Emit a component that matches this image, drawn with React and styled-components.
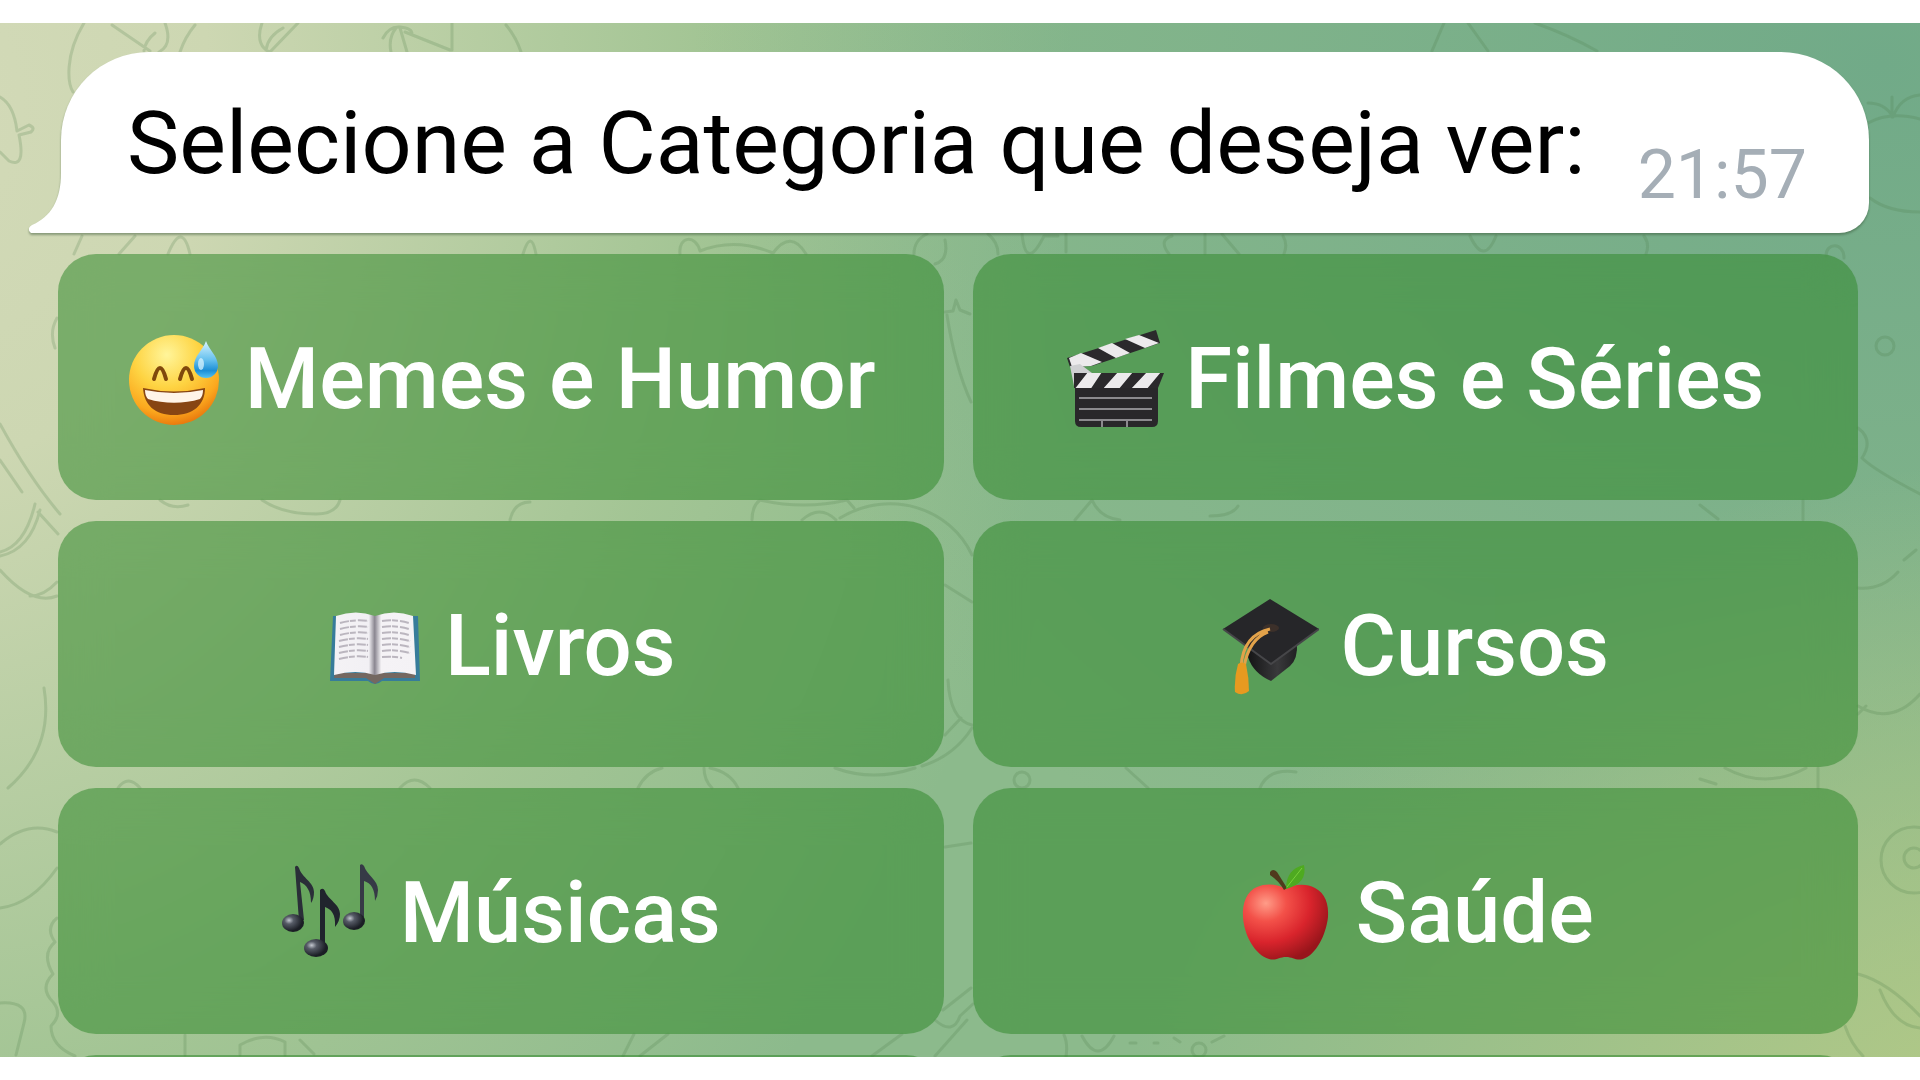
import React from 'react';
import styled, { createGlobalStyle } from 'styled-components';

const GlobalStyle = createGlobalStyle`
  * {
    box-sizing: border-box;
  }

  body {
    margin: 0;
    background: #fff;
    font-family: Roboto, "Liberation Sans", sans-serif;
  }
`;

const Page = styled.main`
  display: flex;
  height: 100vh;
  padding: 23px 0;
`;

const Chat = styled.section`
  position: relative;
  flex: 1;
  overflow: hidden;
  padding-top: 29px;
  background:
    radial-gradient(ellipse 50% 70% at 108% 112%, #b8cb86 0%, rgba(184, 203, 134, 0) 100%),
    radial-gradient(ellipse 62% 95% at 98% 4%, #71aa88 0%, rgba(113, 170, 136, 0) 100%),
    radial-gradient(ellipse 60% 140% at -4% 8%, #d3dab8 0%, #cdd7b2 25%, rgba(178, 204, 154, .6) 68%, rgba(140, 186, 140, 0) 100%),
    #8cba8c;
`;

const Wallpaper = styled.svg`
  position: absolute;
  inset: 0;
  width: 100%;
  height: 100%;
  fill: none;
  stroke: rgba(74, 122, 72, .21);
  stroke-width: 3;
  stroke-linecap: round;
  stroke-linejoin: round;
`;

const Bubble = styled.div`
  position: relative;
  display: flex;
  justify-content: space-between;
  align-items: flex-start;
  margin: 0 51px 21px 61px;
  padding: 39px 62px 38px 66px;
  border-radius: 88px 88px 30px 0;
  background: #fff;
  filter: drop-shadow(0 2px 1px rgba(50, 80, 50, .45));
`;

const Tail = styled.svg`
  position: absolute;
  left: -32px;
  bottom: 0;
  width: 34px;
  height: 60px;
  fill: #fff;
`;

const Message = styled.p`
  margin: 0;
  font-size: 88px;
  line-height: 104px;
  color: #000;
`;

const Time = styled.time`
  align-self: flex-end;
  font-size: 68px;
  line-height: 40px;
  color: #a5aeb6;
`;

const Keyboard = styled.div`
  display: grid;
  grid-template-columns: 1fr 1fr;
  gap: 21px 29px;
  margin: 0 62px 0 58px;
`;

const Key = styled.button`
  display: flex;
  justify-content: center;
  align-items: center;
  gap: 21px;
  height: 246px;
  padding: 3px 0 0;
  border: 0;
  border-radius: 38px;
  background: rgba(50, 137, 45, .54);
  backdrop-filter: blur(24px);
  font-family: inherit;
  font-size: 85px;
  font-weight: 500;
  line-height: 100px;
  color: #fff;
  white-space: nowrap;
  cursor: pointer;
`;

const Emoji = styled.svg`
  flex: none;
  width: 98px;
  height: 98px;
`;

function SweatSmile() {
  return (
    <Emoji viewBox="0 0 98 98" aria-hidden="true">
      <defs>
        <radialGradient id="face" cx=".42" cy=".22" r=".8">
          <stop offset="0" stopColor="#fff59a" />
          <stop offset=".45" stopColor="#fed443" />
          <stop offset=".8" stopColor="#fba81e" />
          <stop offset="1" stopColor="#e8760c" />
        </radialGradient>
        <linearGradient id="drop" x1="0" y1="0" x2="0" y2="1">
          <stop offset="0" stopColor="#d8f4ff" />
          <stop offset=".5" stopColor="#67c1ee" />
          <stop offset=".8" stopColor="#1c8fd6" />
          <stop offset="1" stopColor="#55c3f0" />
        </linearGradient>
      </defs>
      <circle cx="48" cy="50" r="45" fill="url(#face)" />
      <path d="M28 49q6-22 12 0M54 49q6-22 12 0" fill="none" stroke="#80480c" strokeWidth="4" strokeLinecap="round" />
      <path d="M17 58q31 7 62 0c0 17-12 27-31 27S18 75 17 58z" fill="#874513" />
      <path d="M19 60q29 6 58 0c0 4-1 7-3 9-16 5-36 5-52 0-2-2-3-5-3-9z" fill="#fff4e8" />
      <path d="M80 11c3 9 12 15 12 25a12 12 0 0 1-24 0c0-10 9-16 12-25z" fill="url(#drop)" />
      <ellipse cx="75" cy="34" rx="3" ry="6" fill="#e2f8ff" opacity=".7" />
    </Emoji>
  );
}

function Clapper() {
  return (
    <Emoji viewBox="0 0 98 98" aria-hidden="true">
      <defs>
        <clipPath id="armBottom">
          <path d="M8 43h90l-6 15H8z" />
        </clipPath>
      </defs>
      <path d="M1 28 90 0l4 13-68 23-22 1z" fill="#2b292c" />
      <path d="M3 28 15 23 36 32 25 36 6 37zM32 18l14-5 18 10-14 5zM59 9l14-4 20 8-14 5z" fill="#eceaec" />
      <path d="M4 36 14 34l12 9-3 13H8z" fill="#cfd0d2" />
      <g clipPath="url(#armBottom)">
        <path d="M0 40h98v20H0z" fill="#2b292c" />
        <path d="M22 42h14L24 60H8zM52 42h15L52 60H36zM81 42h14L80 60H64z" fill="#eceaec" />
      </g>
      <path d="M9 58h83v33q0 6-6 6H15q-6 0-6-6z" fill="#29272a" />
      <path d="M13 68h73M13 79h73M13 90h73M36 90v7M61 90v7" stroke="#8c8a8e" strokeWidth="2" />
    </Emoji>
  );
}

function Book() {
  return (
    <Emoji viewBox="0 0 98 98" aria-hidden="true">
      <defs>
        <linearGradient id="pageLeft">
          <stop offset="0" stopColor="#f4f2f5" />
          <stop offset=".85" stopColor="#f2f0f4" />
          <stop offset="1" stopColor="#85818b" />
        </linearGradient>
        <linearGradient id="pageRight">
          <stop offset="0" stopColor="#8f8b95" />
          <stop offset=".15" stopColor="#f5f3f6" />
          <stop offset="1" stopColor="#f4f2f5" />
        </linearGradient>
      </defs>
      <path d="M7 19h85l2 65H56q-7 6-14 0H4z" fill="#377c9a" />
      <path d="M9 76h80v5H58l-9 6-9-6H8z" fill="#746861" />
      <path d="M10 19q20-7 39 0v59q-19-6-41 0z" fill="url(#pageLeft)" />
      <path d="M49 19q19-7 38 0l3 59q-22-6-41 0z" fill="url(#pageRight)" />
      <path
        d="M14 26q15-4 28-2M14 32q15-4 28-2M14 38q15-4 28-2M13 44q15-4 29-2M13 50q15-4 29-2M13 56q15-4 29-2M13 62q15-4 29-2M56 24q14-2 27 2M56 30q14-2 27 2M56 36q14-2 27 2M56 42q14-2 28 2M56 48q14-2 28 2M56 54q14-2 28 2M56 60q11-1 20 1"
        fill="none"
        stroke="#bbb6bf"
        strokeWidth="2"
        strokeDasharray="9 1 6 2"
      />
    </Emoji>
  );
}

function GradCap() {
  return (
    <Emoji viewBox="0 0 98 98" aria-hidden="true">
      <defs>
        <linearGradient id="capBase">
          <stop offset="0" stopColor="#151516" />
          <stop offset=".6" stopColor="#39393b" />
          <stop offset="1" stopColor="#202022" />
        </linearGradient>
      </defs>
      <path d="M27 47 76 46q1 16-7 23L50 84Q32 76 27 60z" fill="url(#capBase)" />
      <path d="M49 2 98 32 50 67 2 32z" fill="#262629" />
      <path d="M2 32 50 67 98 32" fill="none" stroke="#464649" strokeWidth="2" />
      <ellipse cx="50" cy="31" rx="8" ry="4" fill="#3c302a" />
      <path d="M49 32Q22 38 20 70M47 35Q28 42 23 70" fill="none" stroke="#e2a24a" strokeWidth="3" />
      <path d="M17 67q4-3 8 0 3 14 3 27-7 6-14 1-1-14 3-28z" fill="#e79a20" />
    </Emoji>
  );
}

function Notes() {
  return (
    <Emoji viewBox="0 0 98 98" aria-hidden="true">
      <defs>
        <radialGradient id="noteHead" cx=".32" cy=".35" r=".6">
          <stop offset="0" stopColor="#c4c8d0" />
          <stop offset=".35" stopColor="#565b66" />
          <stop offset="1" stopColor="#1b1e25" />
        </radialGradient>
      </defs>
      <g transform="translate(1 1)">
        <path d="M13 2q2-3 4 1c3 10 15 14 15 24q0 7-3 11c0-12-4-18-11-21l4 38-5 1z" fill="#2a2e38" />
        <ellipse cx="11" cy="58" rx="11" ry="9" fill="url(#noteHead)" />
      </g>
      <g transform="translate(62 0)">
        <path d="M17 1q2-2 4 1c3 9 14 14 14 24q0 6-3 11c0-12-4-18-11-20v36h-4z" fill="#363a46" />
        <ellipse cx="11" cy="57" rx="11" ry="9" fill="url(#noteHead)" />
      </g>
      <g transform="translate(23 25)">
        <path d="M16 1q3-3 5 1c3 9 15 13 15 23q0 7-5 13c1-13-4-18-10-20v38h-5z" fill="#20242d" />
        <ellipse cx="12" cy="59" rx="12" ry="9" fill="url(#noteHead)" />
      </g>
    </Emoji>
  );
}

function Apple() {
  return (
    <Emoji viewBox="0 0 98 98" aria-hidden="true">
      <defs>
        <radialGradient id="apple" cx=".27" cy=".25" r=".8">
          <stop offset="0" stopColor="#ff9c88" />
          <stop offset=".3" stopColor="#f35149" />
          <stop offset=".65" stopColor="#d9242c" />
          <stop offset="1" stopColor="#98151b" />
        </radialGradient>
      </defs>
      <path
        d="M49 25c8-5 20-6 29-1 10 5 14 16 13 29-2 18-12 38-25 42-7 2-10-2-17-2s-10 4-17 2C18 91 7 71 6 53 5 39 10 27 20 23c9-4 21-3 29 2z"
        fill="url(#apple)"
      />
      <path d="M33 8q3-4 7 0l10 16-3 2q-5-9-14-15z" fill="#503a1c" />
      <path d="M49 25Q49 5 67 1q4 18-18 24z" fill="#4eaa20" />
      <path d="M50 23 65 4" stroke="#78cf3b" strokeWidth="1" />
    </Emoji>
  );
}

function Doodles() {
  return (
    <Wallpaper viewBox="0 23 1920 1034" preserveAspectRatio="none" aria-hidden="true">
      {/* above the message */}
      <path d="M84 23C64 56 68 84 73 92M112 25l38 26M165 23q8 22-6 29M155 33q-10 8-11 18M195 25q-10 12-15 27M262 23c-6 17 0 26 8 29l28-29M283 28q-15 8-17 22M383 38q6-12 17-11 12 1 12 7M396 28q-8 10-5 24M400 28l7 24M405 32l45 18M452 23v27M506 25q10 12 15 27" />
      <path d="M1444 23l-12 28M1468 23l20 28M1535 23q34 12 62 28" />

      {/* star and leaves beside the message */}
      <path d="M0 97q14 8 17 34l12-6q7 3 2 7l-12 3q7 34-10 26L0 152" />
      <path d="M1868 103q17 0 25 14 7-20 27-22M1892 97v20M1868 123q22-12 52-4M1870 198q18 14 50 14" />

      {/* strip under the message */}
      <path d="M82 236l-8 18M135 236l-16 18M168 254q14-34 22 0M523 254q8-26 13 0M680 254c-2-18 16-20 20-3q35-14 73 2 18-24 33 1M914 254q0-14 13-20M945 240q4 20-10 24M988 234q10 8 10 20M1022 234q4 38 22 2h14M1066 234v18M1172 236q-14 4-3 18M1205 234v20M1222 234l17 20" />
      <path d="M1283 236q5 8 1 18M1470 236q14 30 26 0M1644 236q6 8 2 18M1826 256c0-14 18-14 18 2" />

      {/* left margin */}
      <path d="M0 424q30 55 60 90M0 460l22 32M0 552q25-6 35-48M0 556q30-6 40-46M38 512l20 22M0 570q32 36 57 26M30 596q14 0 27-14M57 318q-8 14-2 30M44 688q10 60-36 100M0 844q28-24 57-12M0 908q32-4 57-40M0 1003q30-2 24 20l-8 32M57 918q-12 10-2 24-14 12-2 32-14 14 0 28 10 12-2 24 0 20 24 30" />

      {/* gaps between the columns */}
      <path d="M945 312l8-1 3-11 4 10 10 4M947 315q8 52 24 87M945 585l27 17M948 680q2 40 24 45M945 735l16-17M972 728q-18 28-50 38M945 847l26-4M943 1010l28-22M935 1020q18 16 25-4l13-12M967 1020l-32 36" />

      {/* gaps between the rows */}
      <path d="M160 500q12 10 28 5M262 500q20 14 54 14 20 0 24-14M510 520q4-18 20-18M752 520q0-14 8-20 44 10 87 0l7 8M802 520q18-16 34 0M840 518c50-30 110-10 132 37M1075 520l17-20q8 18 28 20M1210 516q22 0 28-10M1700 505l18 14M1803 500v20" />
      <path d="M118 788q10-14 22 0M400 788q14-16 30 0M638 788q8-16 24-20M704 768q0 12 8 20M710 768q20 4 28 20M835 768q38 14 80 0M1126 768l22 20M1260 788q8-20 36-16M1700 779l16 5M1725 768q40 22 81 0M1818 768v20" />
      <circle cx="1022" cy="780" r="8" />
      <path d="M185 1035v20M240 1055v-10q24-14 45-3v13M300 1040l14 14M634 1034l-11 22M668 1034l-28 22M902 1034l-30 22M1064 1035q4 8 2 22M1082 1036q16 30 32 0M1130 1043h6M1154 1043h4M1174 1038l6 4M1212 1042l12-6" />
      <circle cx="1199" cy="1050" r="7" />

      {/* right margin */}
      <circle cx="1885" cy="346" r="9" />
      <path d="M1858 428q16 12 4 30M1862 458q12 12 58 36M1858 588q24 2 40-16M1904 560l12-10M1858 706q34 20 62-12M1858 714l8-8M1858 974q30 8 62 42M1880 990q14 36 40 38M1845 1026q6 18 18 30" />
      <circle cx="1914" cy="860" r="33" />
      <circle cx="1914" cy="858" r="10" />
    </Wallpaper>
  );
}

const categories = [
  { label: 'Memes e Humor', icon: SweatSmile },
  { label: 'Filmes e Séries', icon: Clapper },
  { label: 'Livros', icon: Book },
  { label: 'Cursos', icon: GradCap },
  { label: 'Músicas', icon: Notes },
  { label: 'Saúde', icon: Apple },
];

export default function App() {
  return (
    <>
      <GlobalStyle />
      <Page>
        <Chat>
          <Doodles />

          <Bubble>
            <Tail viewBox="0 0 34 60" aria-hidden="true">
              <path d="M34 0h-2c0 27-10 44-29 52q-6 4-1 8h32z" />
            </Tail>
            <Message>Selecione a Categoria que deseja ver:</Message>
            <Time>21:57</Time>
          </Bubble>

          <Keyboard>
            {categories.map(({ label, icon: Icon }) => (
              <Key key={label} type="button">
                <Icon />
                {label}
              </Key>
            ))}
            {/* the next row only peeks in from below */}
            <Key as="div" aria-hidden="true" />
            <Key as="div" aria-hidden="true" />
          </Keyboard>
        </Chat>
      </Page>
    </>
  );
}
